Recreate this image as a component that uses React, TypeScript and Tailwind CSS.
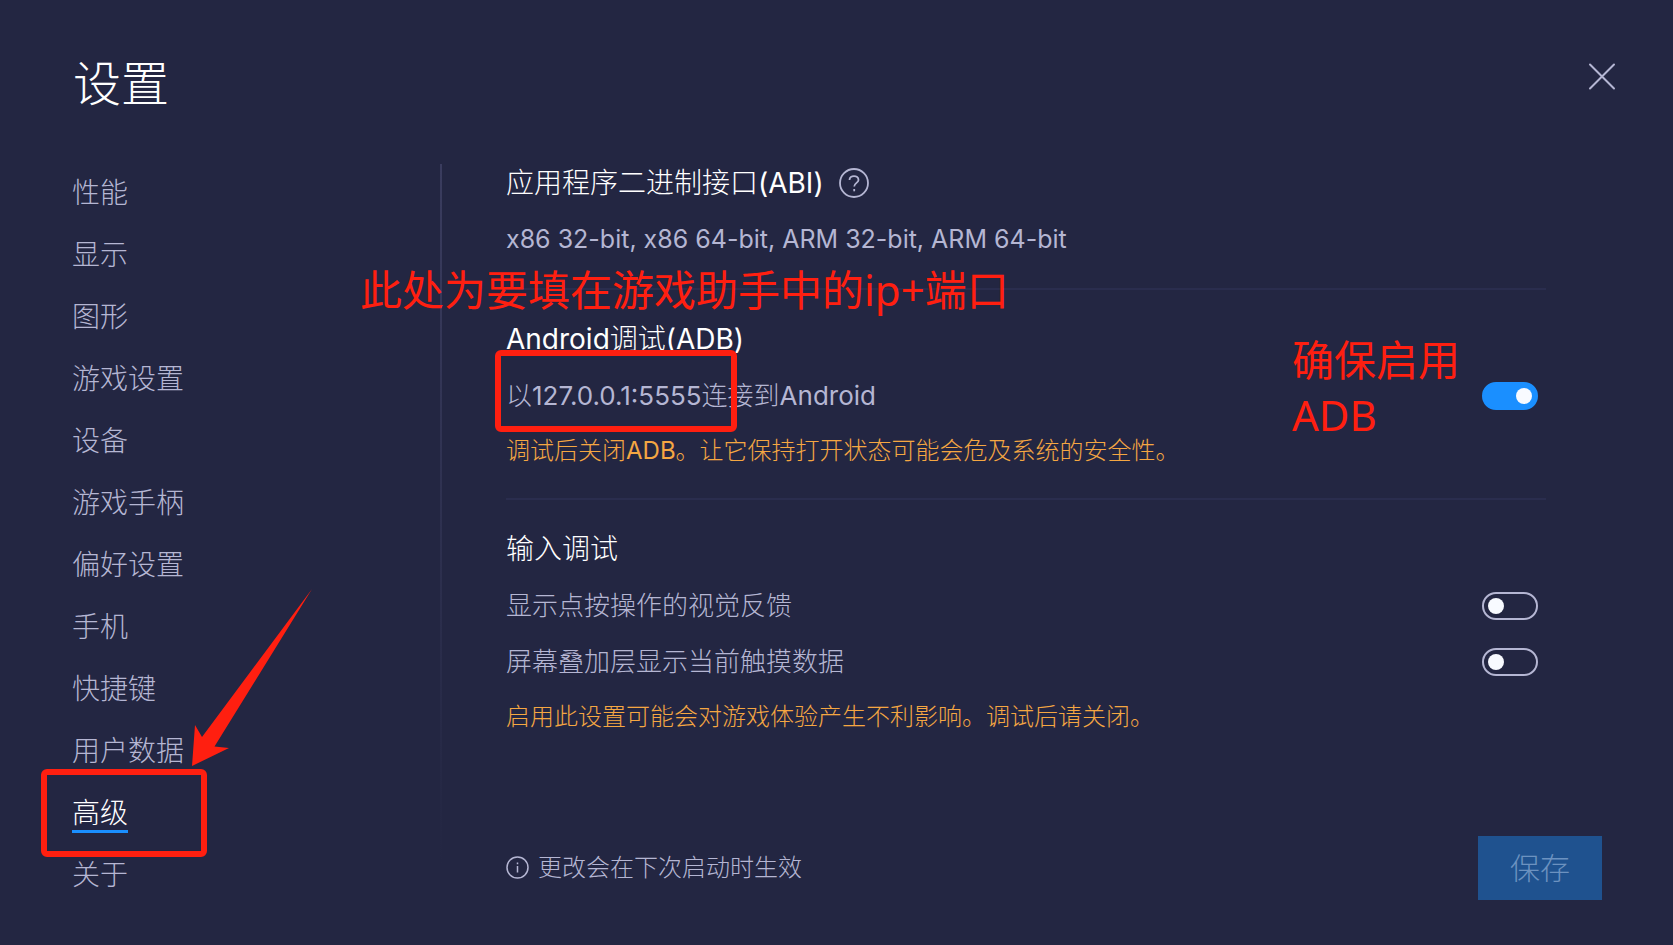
import { useState } from "react";
import type { ReactNode } from "react";

const sections = [
  "性能",
  "显示",
  "图形",
  "游戏设置",
  "设备",
  "游戏手柄",
  "偏好设置",
  "手机",
  "快捷键",
  "用户数据",
  "高级",
  "关于",
];

function Latin({ children }: { children: ReactNode }) {
  return <span className="font-normal">{children}</span>;
}

function Switch({ id, label, initial = false }: { id: string; label: string; initial?: boolean }) {
  const [on, setOn] = useState(initial);
  return (
    <input
      id={id}
      type="checkbox"
      role="switch"
      aria-label={label}
      checked={on}
      onChange={() => setOn(!on)}
      className="mr-2 flex h-7 w-14 shrink-0 cursor-pointer appearance-none items-center rounded-full border-2 border-[#b5b6d3] px-1 before:block before:size-4 before:rounded-full before:bg-[#f8faff] before:content-[''] checked:justify-end checked:border-[#1a8fff] checked:bg-[#1a8fff]"
    />
  );
}

function Nav() {
  return (
    <nav className="mt-0.5 w-[440px] shrink-0 pl-[72px]" aria-label="设置">
      <ul>
        {sections.map((name) => {
          const active = name === "高级";
          return (
            <li key={name} className="relative flex h-[62px] items-center">
              <a
                href="#"
                aria-current={active ? "page" : undefined}
                className={
                  active
                    ? "border-b-[3px] border-[#1a8fff] pt-[3px] text-[28px] leading-[34px] text-white"
                    : "text-[28px] leading-9 text-[#b5b6d3]"
                }
              >
                {name}
              </a>
              {active && (
                <>
                  <div className="pointer-events-none absolute -top-[13px] -left-[31px] h-[88px] w-[166px] rounded-md border-6 border-[#ff1f10]" />
                  <svg
                    className="pointer-events-none absolute -top-[194px] left-[119px] h-[180px] w-[124px]"
                    viewBox="0 0 124 180"
                    fill="#ff1f10"
                    aria-hidden="true"
                  >
                    <path d="M121 1 L11 149 L4 137 L1 178 L38 160 L23.500 158.500 Z" />
                  </svg>
                </>
              )}
            </li>
          );
        })}
      </ul>
    </nav>
  );
}

export default function App() {
  return (
    <div className="flex min-h-screen w-full flex-col overflow-hidden bg-[#232642] font-['Inter','Noto_Sans_CJK_SC',sans-serif] font-light">
      <header className="flex items-start justify-between pt-12 pr-[55px] pl-[73px]">
        <h1 className="text-[48px] leading-[72px] font-light text-white">设置</h1>
        <button type="button" aria-label="关闭" className="mt-3 flex size-8 items-center justify-center">
          <svg className="size-7" viewBox="0 0 28 28" fill="none" stroke="#b5b6d3" strokeWidth="2" strokeLinecap="round">
            <path d="M2 2.500 L26 26.500 M26 2.500 L2 26.500" />
          </svg>
        </button>
      </header>

      <div className="mt-10 flex flex-1">
        <Nav />
        <div className="mt-1 h-[700px] w-0.5 shrink-0 bg-linear-to-b from-[#3a3c5e] to-[#232642]" />

        <div className="flex min-w-0 flex-1 flex-col pl-16">
          <main className="mr-[127px] flex-1">
            <section className="border-b-2 border-[#2a2d4e] pb-7">
              <h2 className="flex h-[46px] items-center text-[28px] leading-9 font-light text-white">
                <span>
                  应用程序二进制接口<Latin>(ABI)</Latin>
                </span>
                <button type="button" aria-label="帮助" className="ml-3.5">
                  <svg className="size-8" viewBox="0 0 32 32" fill="none" stroke="#b5b6d3" strokeWidth="1.800">
                    <circle cx="16" cy="16" r="14" />
                    <path d="M11.500 13 C11.500 7.800 20.500 7.800 20.500 13 C20.500 15.800 16.200 16 16.200 19.500" />
                    <path d="M16.200 22 V24.300" />
                  </svg>
                </button>
              </h2>
              <p className="mt-3 text-[25px] leading-[42px] text-[#b5b6d3]">
                <Latin>x86 32-bit, x86 64-bit, ARM 32-bit, ARM 64-bit</Latin>
              </p>
            </section>

            <section className="relative border-b-2 border-[#2a2d4e] pt-[30px] pb-7">
              <div className="pointer-events-none absolute -top-7 -left-[146px] text-[42px] leading-[55px] font-normal whitespace-nowrap text-[#ff1f10] font-['Noto_Sans','Noto_Sans_CJK_SC',sans-serif]">
                此处为要填在游戏助手中的ip+端口
              </div>
              <h2 className="text-[28px] leading-[38px] font-light text-white">
                <Latin>Android</Latin>调试<Latin>(ADB)</Latin>
              </h2>
              <div className="relative mt-[18px] flex items-center justify-between">
                <label htmlFor="adb" className="relative text-[26px] leading-10 text-[#b5b6d3]">
                  以<Latin>127.0.0.1:5555</Latin>连接到<Latin>Android</Latin>
                  <span className="pointer-events-none absolute -top-[26px] -left-[11px] h-[82px] w-[242px] rounded-md border-6 border-[#ff1f10]" />
                </label>
                <Switch id="adb" label="Android调试(ADB)" initial />
                <div className="pointer-events-none absolute -top-11 right-[86px] text-[42px] leading-[55px] font-normal text-[#ff1f10] font-['Noto_Sans','Noto_Sans_CJK_SC',sans-serif]">
                  确保启用
                  <br />
                  ADB
                </div>
              </div>
              <p className="mt-4 text-[24px] leading-[38px] text-[#f5a742]">
                调试后关闭<Latin>ADB</Latin>。让它保持打开状态可能会危及系统的安全性。
              </p>
            </section>

            <section className="pt-[30px]">
              <h2 className="text-[28px] leading-[38px] font-light text-white">输入调试</h2>
              <div className="mt-[18px] flex items-center justify-between">
                <label htmlFor="taps" className="text-[26px] leading-10 text-[#b5b6d3]">
                  显示点按操作的视觉反馈
                </label>
                <Switch id="taps" label="显示点按操作的视觉反馈" />
              </div>
              <div className="mt-4 flex items-center justify-between">
                <label htmlFor="pointer" className="text-[26px] leading-10 text-[#b5b6d3]">
                  屏幕叠加层显示当前触摸数据
                </label>
                <Switch id="pointer" label="屏幕叠加层显示当前触摸数据" />
              </div>
              <p className="mt-4 text-[24px] leading-[38px] text-[#f5a742]">
                启用此设置可能会对游戏体验产生不利影响。调试后请关闭。
              </p>
            </section>
          </main>

          <footer className="mr-[71px] mb-[45px] flex items-center justify-between">
            <p className="flex items-center gap-2 text-[24px] leading-9 text-[#b5b6d3]">
              <svg className="size-6" viewBox="0 0 24 24" fill="none" stroke="#b5b6d3" strokeWidth="1.500" aria-hidden="true">
                <circle cx="11.500" cy="11.500" r="10.500" />
                <path d="M11.500 10 V16.500 M11.500 6.500 V8.300" />
              </svg>
              更改会在下次启动时生效
            </p>
            <button type="button" className="h-16 w-[124px] bg-[#1f528f] text-[30px] leading-10 text-[#6c92c0]">
              保存
            </button>
          </footer>
        </div>
      </div>
    </div>
  );
}
